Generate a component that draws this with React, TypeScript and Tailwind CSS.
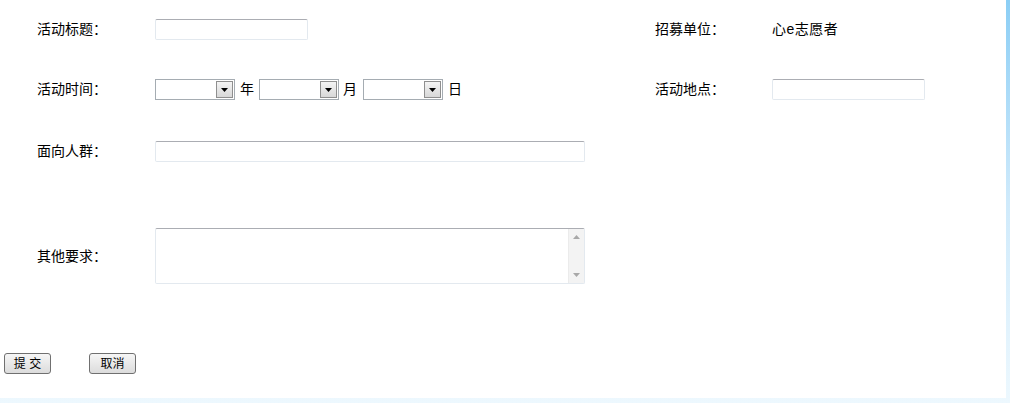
import React from "react";

const font = { fontFamily: '"Liberation Sans", "Noto Sans CJK SC", sans-serif' };

// 文本输入框（Win7风格：上边框偏深）
const TextBox = ({ width }: { width: string }) => (
  <div
    className={`${width} h-[21px] bg-white border border-[#e3e9ef] border-t-[#abadb3] rounded-[2px]`}
  />
);

// 下拉框
const Select = () => (
  <div className="w-[80px] h-[21px] border border-[#a5acb2] bg-white flex items-center justify-end pr-[1px]">
    <div className="w-[17px] h-[17px] border border-[#8f8f8f] bg-gradient-to-b from-[#f4f4f4] to-[#d8d8d8] flex items-center justify-center">
      <svg width="7" height="4" viewBox="0 0 7 4">
        <path d="M0 0h7L3.5 4z" fill="#000" />
      </svg>
    </div>
  </div>
);

const Label = ({ children, w = "w-[118px]" }: { children: React.ReactNode; w?: string }) => (
  <div className={`${w} shrink-0 text-[14px] text-black`}>{children}</div>
);

const Button = ({ children }: { children: React.ReactNode }) => (
  <button className="w-[47px] h-[21px] border border-[#707070] rounded-[3px] bg-gradient-to-b from-[#f6f6f6] to-[#dcdcdc] text-[12px] text-black leading-none">
    {children}
  </button>
);

export default function App() {
  return (
    <div
      className="w-[1010px] h-[403px] bg-gradient-to-b from-[#8bcef5] via-[#cfeafb] to-[#edf8fe]"
      style={font}
    >
      <div className="w-[1006px] h-[398px] bg-white flex flex-col">
        <div className="pl-[37px] flex flex-col">
          {/* 活动标题 / 招募单位 */}
          <div className="mt-[19px] h-[21px] flex items-center">
            <div className="w-[618px] flex items-center">
              <Label>活动标题：</Label>
              <TextBox width="w-[153px]" />
            </div>
            <Label w="w-[117px]">招募单位：</Label>
            <div className="text-[14px] text-black tracking-[0.5px]">心e志愿者</div>
          </div>

          {/* 活动时间 / 活动地点 */}
          <div className="mt-[39px] h-[21px] flex items-center">
            <div className="w-[618px] flex items-center">
              <Label>活动时间：</Label>
              <Select />
              <span className="text-[14px] ml-[5px] mr-[5px]">年</span>
              <Select />
              <span className="text-[14px] ml-[4px] mr-[6px]">月</span>
              <Select />
              <span className="text-[14px] ml-[5px]">日</span>
            </div>
            <Label w="w-[117px]">活动地点：</Label>
            <TextBox width="w-[153px]" />
          </div>

          {/* 面向人群 */}
          <div className="mt-[41px] h-[21px] flex items-center">
            <Label>面向人群：</Label>
            <TextBox width="w-[430px]" />
          </div>

          {/* 其他要求 */}
          <div className="mt-[66px] h-[56px] flex items-center">
            <Label>其他要求：</Label>
            <div className="w-[430px] h-[56px] border border-[#e3e9ef] border-t-[#abadb3] rounded-[2px] bg-white flex justify-end">
              <div className="w-[16px] h-full bg-[#f3f3f3] border-l border-[#ebebeb] flex flex-col items-center justify-between py-[6px]">
                <svg width="7" height="4" viewBox="0 0 7 4">
                  <path d="M3.5 0L7 4H0z" fill="#a8a8a8" />
                </svg>
                <svg width="7" height="4" viewBox="0 0 7 4">
                  <path d="M0 0h7L3.5 4z" fill="#a8a8a8" />
                </svg>
              </div>
            </div>
          </div>
        </div>

        {/* 操作按钮 */}
        <div className="mt-[69px] pl-[4px] flex items-center gap-[38px]">
          <Button>提 交</Button>
          <Button>取消</Button>
        </div>
      </div>
    </div>
  );
}
